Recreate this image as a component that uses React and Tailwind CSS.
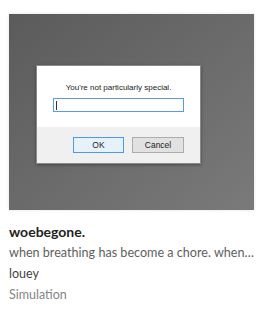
import React from "react";

const Dialog = () => {
  return (
    <div className="w-[165px] h-[99px] flex flex-col bg-white border border-[#8a8a8a] shadow-[0_1px_3px_rgba(0,0,0,0.35)] font-['Liberation_Sans',Arial,sans-serif]">
      <div className="h-[61px] flex flex-col items-center pt-[17px]">
        <span className="text-[8px] leading-[9px] text-[#222]">You're not particularly special.</span>
        <div className="mt-[6px] w-[131px] h-[14px] border border-[#5a9be0] bg-white flex items-center pl-[2px]">
          <span className="w-px h-[9px] bg-[#333]" />
        </div>
      </div>
      <div className="flex-1 bg-[#f0f0f0] flex items-start pt-[10px] pl-[36px] gap-[8px]">
        <div className="w-[51px] h-[16px] bg-[#e5f1fb] border border-[#4c9be6] flex items-center justify-center text-[8.5px] text-[#222]">
          OK
        </div>
        <div className="w-[52px] h-[16px] bg-[#e1e1e1] border border-[#adadad] flex items-center justify-center text-[8.5px] text-[#222]">
          Cancel
        </div>
      </div>
    </div>
  );
};

const GameCell = ({ title, desc, author, genre }) => {
  return (
    <div className="flex flex-col px-[9px] pt-[14px] font-['Lato','Noto_Sans',sans-serif]">
      <div className="w-[245px] h-[196px] bg-gradient-to-br from-[#5b5b5b] to-[#7a7a7a] shadow-[0_0_3px_rgba(0,0,0,0.12)] pl-[27px] pt-[51px]">
        <Dialog />
      </div>
      <div className="flex flex-col mt-[12px]">
        <span className="text-[14px] leading-[20px] font-bold text-[#222]">{title}</span>
        <span className="text-[12.6px] leading-[22px] text-[#606060] truncate">{desc}</span>
        <span className="text-[12.5px] leading-[20px] text-[#434343]">{author}</span>
        <span className="text-[12.5px] leading-[22px] text-[#858585]">{genre}</span>
      </div>
    </div>
  );
};

export default function App() {
  return (
    <div className="w-[263px] h-[325px] bg-white">
      <GameCell
        title="woebegone."
        desc="when breathing has become a chore. when it hurts to exist."
        author="louey"
        genre="Simulation"
      />
    </div>
  );
}
